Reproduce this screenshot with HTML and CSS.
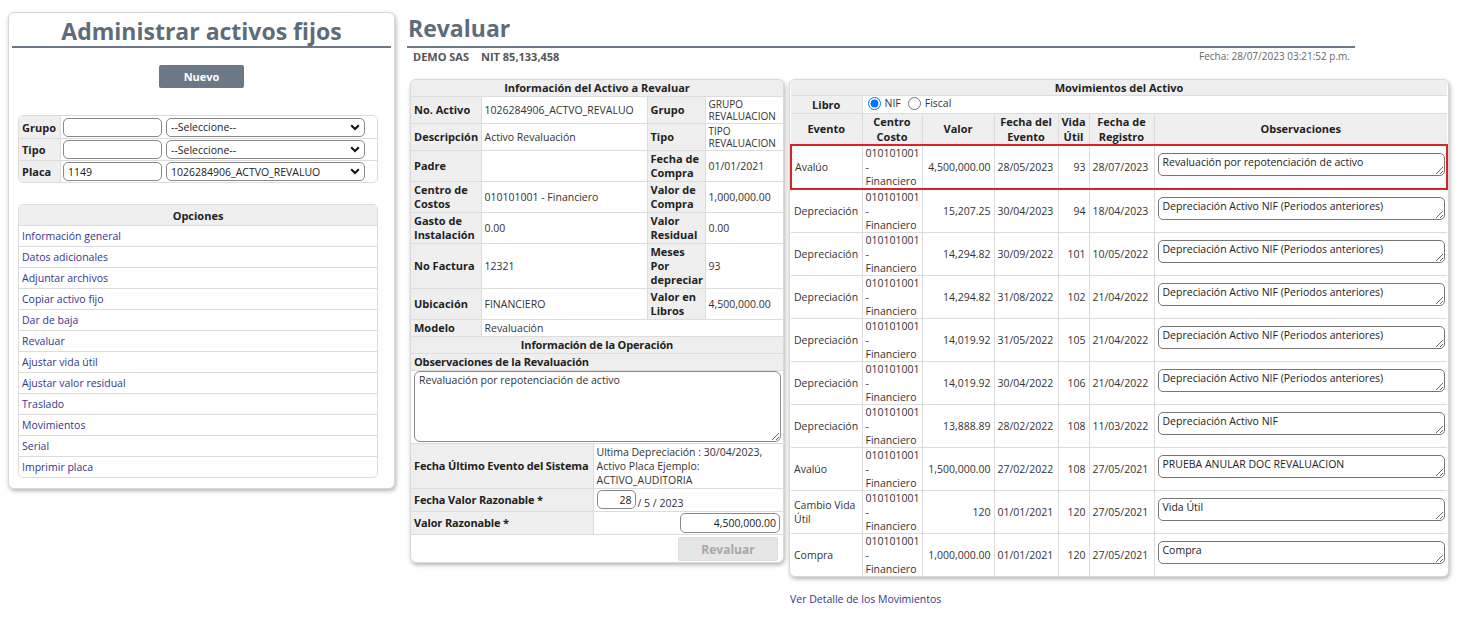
FILE: index.html
```html
<!DOCTYPE html>
<html lang="es">
<head>
<meta charset="utf-8">
<title>Revaluar</title>
<link rel="stylesheet" href="styles.css">
</head>
<body>
<div class="page">
  <aside class="card side">
    <h1 class="side-title">Administrar activos fijos</h1>
    <div class="new-wrap"><button class="btn-new" type="button">Nuevo</button></div>
    <table class="filter">
      <colgroup><col class="c-lbl"><col class="c-code"><col></colgroup>
      <tr>
        <th>Grupo</th>
        <td><input class="in-code" type="text" value=""></td>
        <td><span class="sel-wrap"><select class="sel"><option>--Seleccione--</option></select><svg class="chev" width="10" height="7" viewBox="0 0 10 7"><path d="M1.2 1.2 L5 5 L8.8 1.2" fill="none" stroke="#111" stroke-width="2"/></svg></span></td>
      </tr>
      <tr>
        <th>Tipo</th>
        <td><input class="in-code" type="text" value=""></td>
        <td><span class="sel-wrap"><select class="sel"><option>--Seleccione--</option></select><svg class="chev" width="10" height="7" viewBox="0 0 10 7"><path d="M1.2 1.2 L5 5 L8.8 1.2" fill="none" stroke="#111" stroke-width="2"/></svg></span></td>
      </tr>
      <tr>
        <th>Placa</th>
        <td><input class="in-code" type="text" value="1149"></td>
        <td><span class="sel-wrap"><select class="sel"><option>1026284906_ACTVO_REVALUO</option></select><svg class="chev" width="10" height="7" viewBox="0 0 10 7"><path d="M1.2 1.2 L5 5 L8.8 1.2" fill="none" stroke="#111" stroke-width="2"/></svg></span></td>
      </tr>
    </table>
    <table class="options">
      <tr><th>Opciones</th></tr>
      <tr><td><a href="#">Información general</a></td></tr>
      <tr><td><a href="#">Datos adicionales</a></td></tr>
      <tr><td><a href="#">Adjuntar archivos</a></td></tr>
      <tr><td><a href="#">Copiar activo fijo</a></td></tr>
      <tr><td><a href="#">Dar de baja</a></td></tr>
      <tr><td><a href="#">Revaluar</a></td></tr>
      <tr><td><a href="#">Ajustar vida útil</a></td></tr>
      <tr><td><a href="#">Ajustar valor residual</a></td></tr>
      <tr><td><a href="#">Traslado</a></td></tr>
      <tr><td><a href="#">Movimientos</a></td></tr>
      <tr><td><a href="#">Serial</a></td></tr>
      <tr><td><a href="#">Imprimir placa</a></td></tr>
    </table>
  </aside>

  <main class="main">
    <header class="head">
      <h2 class="head-title">Revaluar</h2>
      <div class="head-sub">
        <span class="company">DEMO SAS<span class="sp"></span>NIT 85,133,458</span>
        <span class="date">Fecha: 28/07/2023 03:21:52 p.m.</span>
      </div>
    </header>

    <div class="panels">
      <section class="card info">
        <table class="itbl">
          <colgroup><col class="i1"><col class="i2"><col class="i3"><col></colgroup>
          <tr><th colspan="4" class="sec">Información del Activo a Revaluar</th></tr>
          <tr><th>No. Activo</th><td>1026284906_ACTVO_REVALUO</td><th>Grupo</th><td class="small">GRUPO<br>REVALUACION</td></tr>
          <tr><th>Descripción</th><td>Activo Revaluación</td><th>Tipo</th><td class="small">TIPO<br>REVALUACION</td></tr>
          <tr><th>Padre</th><td></td><th>Fecha de<br>Compra</th><td>01/01/2021</td></tr>
          <tr><th>Centro de<br>Costos</th><td>010101001 - Financiero</td><th>Valor de<br>Compra</th><td>1,000,000.00</td></tr>
          <tr><th>Gasto de<br>Instalación</th><td>0.00</td><th>Valor<br>Residual</th><td>0.00</td></tr>
          <tr><th>No Factura</th><td>12321</td><th>Meses<br>Por<br>depreciar</th><td>93</td></tr>
          <tr><th>Ubicación</th><td>FINANCIERO</td><th>Valor en<br>Libros</th><td>4,500,000.00</td></tr>
          <tr><th>Modelo</th><td colspan="3">Revaluación</td></tr>
        </table>
        <table class="otbl">
          <colgroup><col class="o1"><col></colgroup>
          <tr><th colspan="2" class="sec">Información de la Operación</th></tr>
          <tr><th colspan="2">Observaciones de la Revaluación</th></tr>
          <tr><td colspan="2" class="ta-cell"><textarea class="obs-big">Revaluación por repotenciación de activo</textarea></td></tr>
          <tr><th>Fecha Último Evento del Sistema</th><td>Ultima Depreciación : 30/04/2023,<br>Activo Placa Ejemplo:<br>ACTIVO_AUDITORIA</td></tr>
          <tr><th>Fecha Valor Razonable *</th><td class="fv"><input class="in-day" type="text" value="28"><span class="fv-rest">/ 5 / 2023</span></td></tr>
          <tr><th>Valor Razonable *</th><td class="vr"><input class="in-val" type="text" value="4,500,000.00"></td></tr>
          <tr><td colspan="2" class="btn-cell"><button class="btn-rev" type="button" disabled>Revaluar</button></td></tr>
        </table>
      </section>

      <div class="mov-col">
        <section class="card mov">
          <table class="mtbl">
            <colgroup><col class="m1"><col class="m2"><col class="m3"><col class="m4"><col class="m5"><col class="m6"><col></colgroup>
            <tr><th colspan="7" class="sec">Movimientos del Activo</th></tr>
            <tr class="libro"><th>Libro</th><td colspan="6"><label class="rad"><input type="radio" name="libro" checked>NIF</label><label class="rad"><input type="radio" name="libro">Fiscal</label></td></tr>
            <tr class="mhead"><th>Evento</th><th>Centro<br>Costo</th><th>Valor</th><th>Fecha del<br>Evento</th><th>Vida<br>Útil</th><th>Fecha de<br>Registro</th><th>Observaciones</th></tr>
            <tr class="hl"><td>Avalúo</td><td>010101001<br>-<br>Financiero</td><td class="r">4,500,000.00</td><td>28/05/2023</td><td class="r">93</td><td>28/07/2023</td><td><textarea class="obs">Revaluación por repotenciación de activo</textarea></td></tr>
            <tr><td>Depreciación</td><td>010101001<br>-<br>Financiero</td><td class="r">15,207.25</td><td>30/04/2023</td><td class="r">94</td><td>18/04/2023</td><td><textarea class="obs">Depreciación Activo NIF (Periodos anteriores)</textarea></td></tr>
            <tr><td>Depreciación</td><td>010101001<br>-<br>Financiero</td><td class="r">14,294.82</td><td>30/09/2022</td><td class="r">101</td><td>10/05/2022</td><td><textarea class="obs">Depreciación Activo NIF (Periodos anteriores)</textarea></td></tr>
            <tr><td>Depreciación</td><td>010101001<br>-<br>Financiero</td><td class="r">14,294.82</td><td>31/08/2022</td><td class="r">102</td><td>21/04/2022</td><td><textarea class="obs">Depreciación Activo NIF (Periodos anteriores)</textarea></td></tr>
            <tr><td>Depreciación</td><td>010101001<br>-<br>Financiero</td><td class="r">14,019.92</td><td>31/05/2022</td><td class="r">105</td><td>21/04/2022</td><td><textarea class="obs">Depreciación Activo NIF (Periodos anteriores)</textarea></td></tr>
            <tr><td>Depreciación</td><td>010101001<br>-<br>Financiero</td><td class="r">14,019.92</td><td>30/04/2022</td><td class="r">106</td><td>21/04/2022</td><td><textarea class="obs">Depreciación Activo NIF (Periodos anteriores)</textarea></td></tr>
            <tr><td>Depreciación</td><td>010101001<br>-<br>Financiero</td><td class="r">13,888.89</td><td>28/02/2022</td><td class="r">108</td><td>11/03/2022</td><td><textarea class="obs">Depreciación Activo NIF</textarea></td></tr>
            <tr><td>Avalúo</td><td>010101001<br>-<br>Financiero</td><td class="r">1,500,000.00</td><td>27/02/2022</td><td class="r">108</td><td>27/05/2021</td><td><textarea class="obs">PRUEBA ANULAR DOC REVALUACION</textarea></td></tr>
            <tr><td>Cambio Vida<br>Útil</td><td>010101001<br>-<br>Financiero</td><td class="r">120</td><td>01/01/2021</td><td class="r">120</td><td>27/05/2021</td><td><textarea class="obs">Vida Útil</textarea></td></tr>
            <tr><td>Compra</td><td>010101001<br>-<br>Financiero</td><td class="r">1,000,000.00</td><td>01/01/2021</td><td class="r">120</td><td>27/05/2021</td><td><textarea class="obs">Compra</textarea></td></tr>
          </table>
        </section>
        <a class="detail-link" href="#">Ver Detalle de los Movimientos</a>
      </div>
    </div>
  </main>
</div>
</body>
</html>
```
FILE: styles.css
```css
* { box-sizing: border-box; }

body {
  margin: 0;
  font-family: "Open Sans", "DejaVu Sans", sans-serif;
  font-size: 10.5px;
  color: #333;
  background: #fff;
}

.page {
  display: flex;
  align-items: flex-start;
  gap: 12px;
  padding: 12px 0 0 8px;
}

.card {
  background: #fff;
  border: 1px solid #d9d9d9;
  border-radius: 6px;
  box-shadow: 1px 2px 4px rgba(0, 0, 0, 0.3);
  overflow: hidden;
}

/* ---------- left panel ---------- */
.side {
  width: 387px;
  padding: 0 3px 10px;
}

.side-title {
  margin: 0;
  padding: 4px 0 1px;
  font-size: 23px;
  line-height: 28px;
  font-weight: 700;
  color: #5e6c7a;
  text-align: center;
  border-bottom: 2px solid #6b7884;
}

.new-wrap {
  margin-top: 17px;
  text-align: center;
}

.btn-new {
  width: 85px;
  height: 23px;
  border: 0;
  border-radius: 2px;
  background: #6b7886;
  color: #fff;
  font: 700 11px "Open Sans", sans-serif;
}

.filter {
  margin: 27px 0 0 6px;
  width: 360px;
  border-collapse: separate;
  border-spacing: 0;
  border: 1px solid #dcdcdc;
  border-radius: 5px;
  table-layout: fixed;
}
.filter .c-lbl { width: 42px; }
.filter .c-code { width: 103px; }
.filter th {
  background: #efefef;
  font-size: 11px;
  font-weight: 700;
  color: #222;
  text-align: left;
  padding: 0 3px;
  border-right: 1px solid #dcdcdc;
}
.filter tr:first-child th { border-top-left-radius: 5px; }
.filter tr:last-child th { border-bottom-left-radius: 5px; }
.filter td { padding: 1px 2px; height: 22px; }
.filter tr + tr th,
.filter tr + tr td { border-top: 1px solid #dcdcdc; }

.in-code {
  width: 99px;
  height: 19px;
  border: 1px solid #888;
  border-radius: 5px;
  padding: 0 4px;
  font: 10.5px "Open Sans", sans-serif;
  color: #222;
  display: block;
}

.sel-wrap {
  position: relative;
  display: block;
  width: 199px;
}
.sel {
  -webkit-appearance: none;
  appearance: none;
  display: block;
  width: 199px;
  height: 19px;
  border: 1px solid #888;
  border-radius: 5px;
  background: #fff;
  padding: 0 4px;
  font: 10.5px "Open Sans", sans-serif;
  color: #222;
}
.chev {
  position: absolute;
  right: 5px;
  top: 6px;
  pointer-events: none;
}

.options {
  margin: 21px 0 0 6px;
  width: 360px;
  border-collapse: separate;
  border-spacing: 0;
  border: 1px solid #dcdcdc;
  border-radius: 5px;
}
.options th {
  background: #efefef;
  height: 20px;
  font-size: 11px;
  font-weight: 700;
  color: #222;
  border-radius: 5px 5px 0 0;
}
.options td {
  height: 21px;
  padding: 0 3px;
  border-top: 1px solid #dcdcdc;
}
.options a {
  color: #35358d;
  text-decoration: none;
}

/* ---------- main ---------- */
.main { display: flex; flex-direction: column; }

.head { width: 948px; }
.head-title {
  margin: 0;
  padding: 2px 0 4px 1px;
  font-size: 23px;
  line-height: 28px;
  font-weight: 700;
  color: #5e6c7a;
  border-bottom: 2px solid #6b7884;
}
.head-sub {
  display: flex;
  justify-content: space-between;
  align-items: center;
  height: 16px;
  padding: 0 5px 0 6px;
}
.company {
  font-size: 11px;
  font-weight: 700;
  color: #555;
}
.company .sp { display: inline-block; width: 12px; }
.date {
  font-size: 10px;
  color: #666;
}

.panels {
  display: flex;
  align-items: flex-start;
  gap: 5px;
  margin: 15px 0 0 3px;
}

/* info panel */
.info { width: 374px; }

.itbl, .otbl {
  width: 100%;
  border-collapse: collapse;
  table-layout: fixed;
}
.itbl .i1 { width: 70px; }
.itbl .i2 { width: 166px; }
.itbl .i3 { width: 58px; }
.otbl .o1 { width: 182px; }

.itbl th, .itbl td, .otbl th, .otbl td {
  border: 1px solid #dcdcdc;
  padding: 1px 3px;
  line-height: 14px;
  vertical-align: middle;
}
.itbl tr > :first-child, .otbl tr > :first-child { border-left: 0; }
.itbl tr > :last-child, .otbl tr > :last-child { border-right: 0; }
.itbl tr:first-child > *, .otbl tr:first-child > * { border-top: 0; }
.otbl tr:last-child > * { border-bottom: 0; }

.itbl th, .otbl th {
  background: #efefef;
  font-size: 11px;
  font-weight: 700;
  color: #222;
  text-align: left;
}
.otbl th {
  white-space: nowrap;
  letter-spacing: -0.15px;
}
th.sec { text-align: center; }

.itbl td.small {
  font-size: 10px;
  line-height: 12px;
}

.ta-cell { padding: 0 2px 1px 3px !important; }
.obs-big {
  display: block;
  width: 367px;
  height: 71px;
  border: 1px solid #888;
  border-radius: 6px;
  padding: 1px 4px;
  font: 10.5px/14px "Open Sans", sans-serif;
  color: #333;
  resize: vertical;
}

.in-day {
  width: 39px;
  height: 19px;
  border: 1px solid #888;
  border-radius: 5px;
  padding: 0 3px;
  text-align: right;
  font: 10.5px "Open Sans", sans-serif;
  color: #222;
  vertical-align: middle;
}
.fv-rest {
  display: inline-block;
  margin-left: 2px;
  vertical-align: -5px;
}
.vr { text-align: right; }
.in-val {
  width: 100px;
  height: 20px;
  border: 1px solid #888;
  border-radius: 5px;
  padding: 0 3px;
  text-align: right;
  font: 10.5px "Open Sans", sans-serif;
  color: #222;
  vertical-align: middle;
}
.btn-cell {
  text-align: right;
  padding: 2px 5px 1px 3px !important;
}
.btn-rev {
  width: 100px;
  height: 24px;
  border: 1px solid #ddd;
  border-radius: 2px;
  background: #e6e6e6;
  color: #a8a8a8;
  font: 700 12px "Open Sans", sans-serif;
}

/* movements panel */
.mov-col {
  display: flex;
  flex-direction: column;
  width: 660px;
}
.mov { width: 660px; }

.mtbl {
  width: 100%;
  border-collapse: collapse;
  table-layout: fixed;
}
.mtbl .m1 { width: 71px; }
.mtbl .m2 { width: 60px; }
.mtbl .m3 { width: 72px; }
.mtbl .m4 { width: 64px; }
.mtbl .m5 { width: 31px; }
.mtbl .m6 { width: 65px; }

.mtbl th, .mtbl td {
  border: 1px solid #dcdcdc;
  vertical-align: middle;
}
.mtbl tr > :first-child { border-left: 0; }
.mtbl tr > :last-child { border-right: 0; }
.mtbl tr:first-child > * { border-top: 0; }
.mtbl tr:last-child > * { border-bottom: 0; }

.mtbl th {
  background: #efefef;
  font-size: 11px;
  font-weight: 700;
  color: #222;
  line-height: 15px;
  padding: 0 1px;
  text-align: center;
}
.mtbl td {
  padding: 0 3px;
  line-height: 14px;
  white-space: nowrap;
}
.mtbl td.r { text-align: right; }

.libro td { padding: 0 2px; }
.rad {
  display: inline-flex;
  align-items: center;
  margin-right: 4px;
  color: #333;
}
.rad input {
  width: 13px;
  height: 13px;
  margin: 0 4px 0 3px;
}

.obs {
  display: block;
  width: 287px;
  height: 23px;
  margin: 0 0 4px 0;
  border: 1px solid #777;
  border-radius: 5px;
  padding: 1px 4px;
  font: 10.5px/14px "Open Sans", sans-serif;
  color: #222;
  resize: vertical;
  overflow: hidden;
}

.mtbl tr.hl td {
  border-top: 2px solid #d6242c;
  border-bottom: 2px solid #d6242c;
}
.mtbl tr.hl td:first-child { border-left: 2px solid #d6242c; }
.mtbl tr.hl td:last-child { border-right: 2px solid #d6242c; }

.detail-link {
  margin-top: 15px;
  padding-left: 1px;
  color: #35358d;
  text-decoration: none;
  line-height: 14px;
}
```
